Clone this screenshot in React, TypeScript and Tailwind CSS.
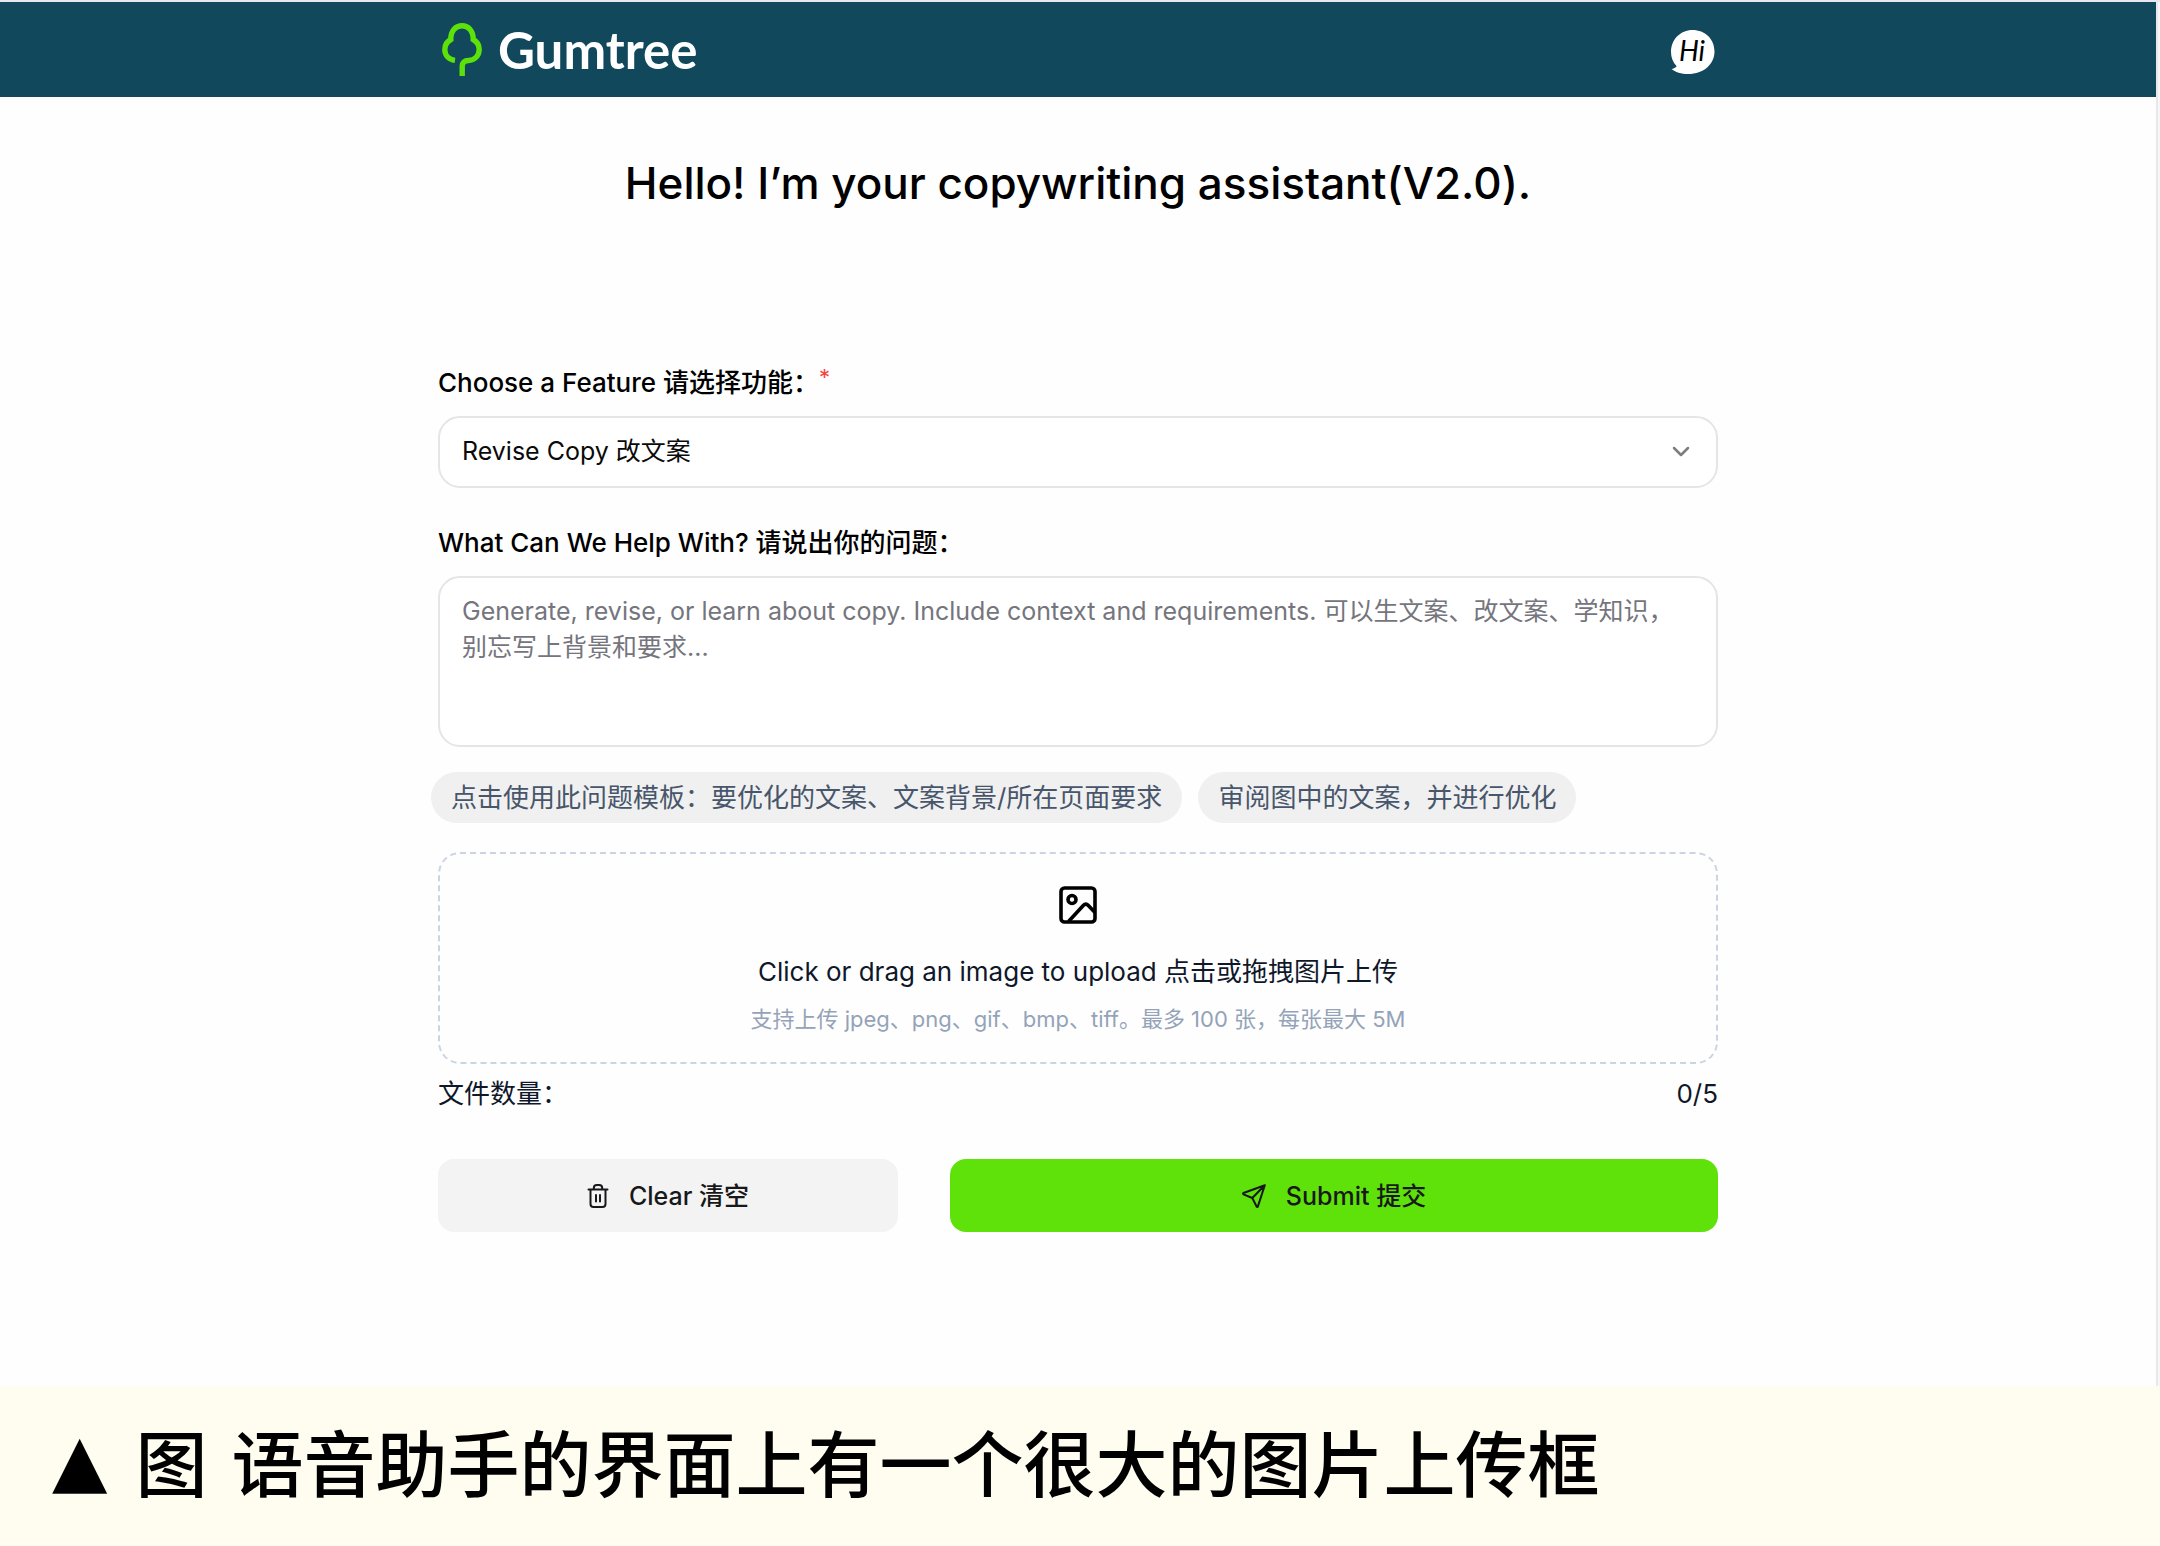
import React from "react";

function TreeLogo() {
  return (
    <svg viewBox="0 0 40 54" className="h-[54px] w-10" fill="none" stroke="#5ce20a" strokeWidth="5.4" aria-hidden="true">
      <path d="M13 37.4C6.5 36.6 2.8 32 2.8 26.5c0-4.300 2.300-8 6-10C8.600 8 13.500 2.800 20 2.800S31.400 8 31.200 16.500c3.700 2 6 5.700 6 10 0 6-4.600 11-10.700 11-4 0-6.300 2.200-6.300 6V53" />
    </svg>
  );
}

function HiBadge() {
  return (
    <button type="button" aria-label="Hi" className="mt-1 block">
      <svg viewBox="0 0 44 44" className="size-11">
        <path
          d="M21.500 0C34 0 43.500 9 43.500 21.500S33 44 17 44C10.500 44 4 42 .5 39c2.200-.4 4-1.300 5.200-2.800C2 32.500 0 27.500 0 22 0 9.500 9.500 0 21.500 0Z"
          fill="#fff"
        />
        <text x="21" y="31" textAnchor="middle" fontSize="28" fontStyle="italic" fill="#000" className="font-['Lato',sans-serif] font-normal">
          Hi
        </text>
      </svg>
    </button>
  );
}

function ChevronIcon() {
  return (
    <svg viewBox="0 0 18 12" className="pointer-events-none absolute right-7 h-3 w-[18px]" fill="none" stroke="#7d7d7d" strokeWidth="2.500" strokeLinecap="round" strokeLinejoin="round" aria-hidden="true">
      <path d="M2 2l7 7 7-7" />
    </svg>
  );
}

function ImageIcon() {
  return (
    <svg viewBox="0 0 38 38" className="size-[38px]" fill="none" stroke="#000" strokeWidth="3.600" strokeLinejoin="round" aria-hidden="true">
      <rect x="2" y="2" width="34" height="34" rx="3.500" />
      <circle cx="13" cy="13.500" r="4" />
      <path d="M9.500 35.500L24.500 19.200c1.400-1.500 3.200-1.500 4.600 0L36 26.500" />
    </svg>
  );
}

function TrashIcon() {
  return (
    <svg viewBox="0 0 22 24" className="h-6 w-[22px]" fill="none" stroke="currentColor" strokeWidth="2" strokeLinecap="round" strokeLinejoin="round" aria-hidden="true">
      <path d="M1.500 5.500h19M3.500 5.500v14.500a3 3 0 0 0 3 3h9a3 3 0 0 0 3-3V5.500M6.800 5.500V4a3 3 0 0 1 3-3h2.400a3 3 0 0 1 3 3v1.500M9 11v6.500M13 11v6.500" />
    </svg>
  );
}

function SendIcon() {
  return (
    <svg viewBox="0 0 24 24" className="size-6" fill="none" stroke="currentColor" strokeWidth="2" strokeLinecap="round" strokeLinejoin="round" aria-hidden="true">
      <path d="M22.800 1.200L1.500 9c-.6.2-.6 1 0 1.300L10.300 14l4.300 8.500c.3.6 1.100.6 1.300-.1L22.800 1.200ZM10.300 14L22.800 1.200" />
    </svg>
  );
}

const templates = ["点击使用此问题模板：要优化的文案、文案背景/所在页面要求", "审阅图中的文案，并进行优化"];

export default function App() {
  return (
    <div className="font-['Inter','Noto_Sans_CJK_SC',sans-serif] text-[25px] leading-9 text-[#0a0a0a]">
      <div className="border-t-2 border-[#e6e8ee] bg-[#f7f7f8] pr-0.5">
        <div className="border-r-2 border-[#e8e8ea] bg-[#fefefe] pb-[154px]">
          <header className="bg-[#11485c]">
            <div className="mx-auto flex h-[95px] max-w-[1280px] items-center justify-between pr-[3px] pl-1">
              <a href="#" className="flex items-center gap-4 text-white">
                <TreeLogo />
                <span className="font-['Lato',sans-serif] text-[51px] leading-[60px] font-bold">Gumtree</span>
              </a>
              <HiBadge />
            </div>
          </header>

          <main className="mx-auto max-w-[1280px]">
            <h1 className="pt-14 text-center text-[44px] leading-[60px] font-medium text-black">Hello! I’m your copywriting assistant(V2.0).</h1>

            <form className="pt-[152px]" onSubmit={(e) => e.preventDefault()}>
              <label htmlFor="feature" className="flex text-[26px] font-medium text-black">
                Choose a Feature 请选择功能：
                <span className="text-[22px] leading-6 font-normal text-[#f5443f]">*</span>
              </label>
              <div className="relative mt-[15px] flex items-center">
                <select id="feature" className="h-18 w-full appearance-none rounded-[22px] border-2 border-[#e5e5e5] bg-white px-[22px] pb-0.5 outline-none">
                  <option>Revise Copy 改文案</option>
                </select>
                <ChevronIcon />
              </div>

              <label htmlFor="question" className="mt-[37px] block text-[26px] font-medium text-black">
                What Can We Help With? 请说出你的问题：
              </label>
              <textarea
                id="question"
                placeholder="Generate, revise, or learn about copy. Include context and requirements. 可以生文案、改文案、学知识，别忘写上背景和要求..."
                className="mt-[15px] block h-[171px] w-full resize-none rounded-[22px] border-2 border-[#e5e5e5] bg-white px-[22px] py-[15px] outline-none placeholder:text-[#75757d]"
              />

              <div className="-ml-[7px] flex gap-4 pt-[25px]">
                {templates.map((t) => (
                  <button key={t} type="button" className="h-[51px] rounded-full bg-[#f0f0f0] px-5 text-[26px] text-[#47566b]">
                    {t}
                  </button>
                ))}
              </div>

              <button type="button" className="mt-[29px] flex w-full flex-col items-center rounded-[22px] border-2 border-dashed border-[#cbd5e1] pt-8 pb-[25px] text-[#0f172a]">
                <ImageIcon />
                <span className="mt-[30px] text-[26px]">Click or drag an image to upload 点击或拖拽图片上传</span>
                <span className="mt-[11px] text-[22px] text-[#94a3b8]">支持上传 jpeg、png、gif、bmp、tiff。最多 100 张，每张最大 5M</span>
              </button>

              <div className="mt-3 flex justify-between text-[26px] text-[#0f172a]">
                <span>文件数量：</span>
                <span>0/5</span>
              </div>

              <div className="mt-[47px] grid grid-cols-[460fr_768fr] gap-[52px] font-medium text-[#18181b]">
                <button type="button" className="flex h-[73px] items-center justify-center gap-5 rounded-2xl bg-[#f3f3f3]">
                  <TrashIcon />
                  Clear 清空
                </button>
                <button type="submit" className="flex h-[73px] items-center justify-center gap-5 rounded-2xl bg-[#5ee20a]">
                  <SendIcon />
                  Submit 提交
                </button>
              </div>
            </form>
          </main>
        </div>
      </div>

      <p className="flex gap-7 bg-[#fffdf0] pt-[26px] pr-8 pb-[38px] pl-[52px] font-['Noto_Sans_CJK_SC',sans-serif] text-[72px] leading-[96px] font-medium text-black">
        <span className="font-['DejaVu_Sans',sans-serif]">▲</span>
        <span className="flex gap-6">
          <span>图</span>
          <span>语音助手的界面上有一个很大的图片上传框</span>
        </span>
      </p>
    </div>
  );
}
